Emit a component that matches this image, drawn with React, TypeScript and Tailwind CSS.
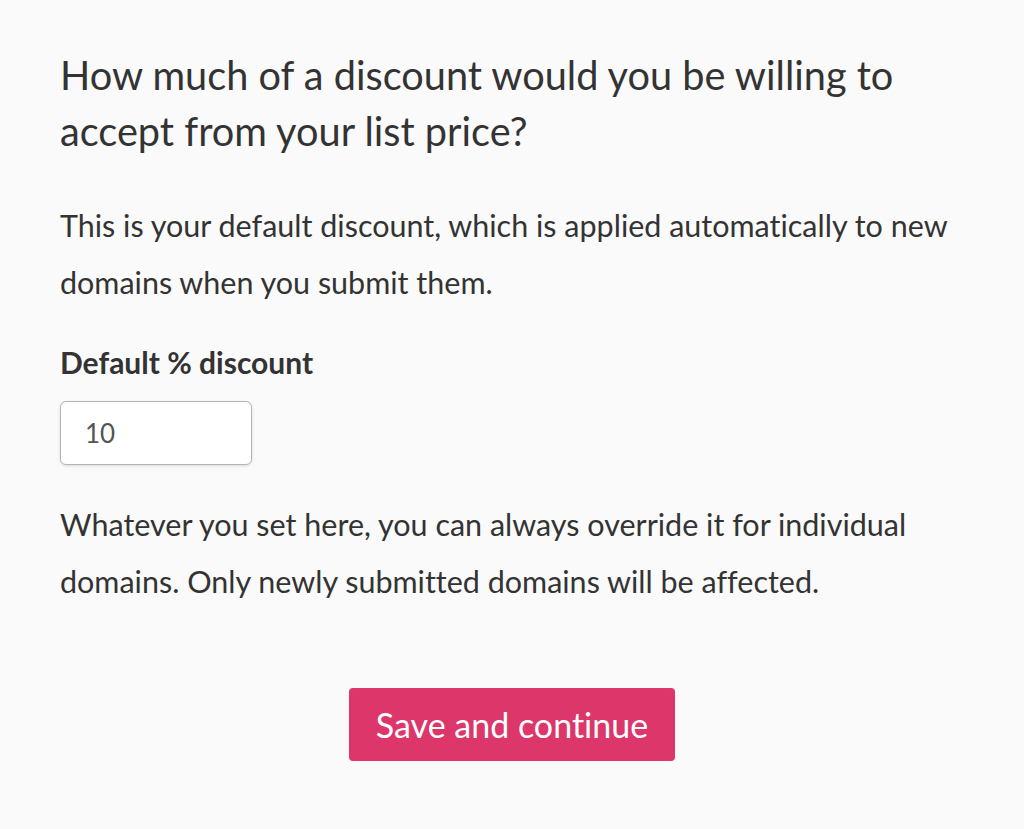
import React from "react";

export default function App() {
  return (
    <div className="min-h-[829px] w-full bg-[#fafafa] text-[#333333] [font-variant-ligatures:none]" style={{ fontFamily: "Lato, 'Open Sans', sans-serif" }}>
      <div className="px-[60px] pt-[47px]">
        <h1 className="text-[39.7px] leading-[56px] font-normal">
          How much of a discount would you be willing to accept from your list price?
        </h1>
        <p className="mt-[38px] text-[30.5px] leading-[57px]">
          This is your default discount, which is applied automatically to new domains when you submit them.
        </p>
        <label className="mt-[33px] block text-[30px] leading-[36px] font-bold">Default % discount</label>
        <input
          defaultValue="10"
          className="mt-[21px] block h-[64px] w-[192px] rounded-[6px] border border-[#b5b5b5] bg-white px-[24px] text-[26px] text-[#555555] shadow-[0_1px_3px_rgba(0,0,0,0.12)] outline-none"
        />
        <p className="mt-[31px] text-[30.5px] leading-[57px]">
          Whatever you set here, you can always override it for individual domains. Only newly submitted domains will be affected.
        </p>
        <div className="mt-[78px] flex justify-center">
          <button className="h-[73px] w-[326px] rounded-[4px] bg-[#dc366b] text-[34px] text-white">Save and continue</button>
        </div>
      </div>
    </div>
  );
}
